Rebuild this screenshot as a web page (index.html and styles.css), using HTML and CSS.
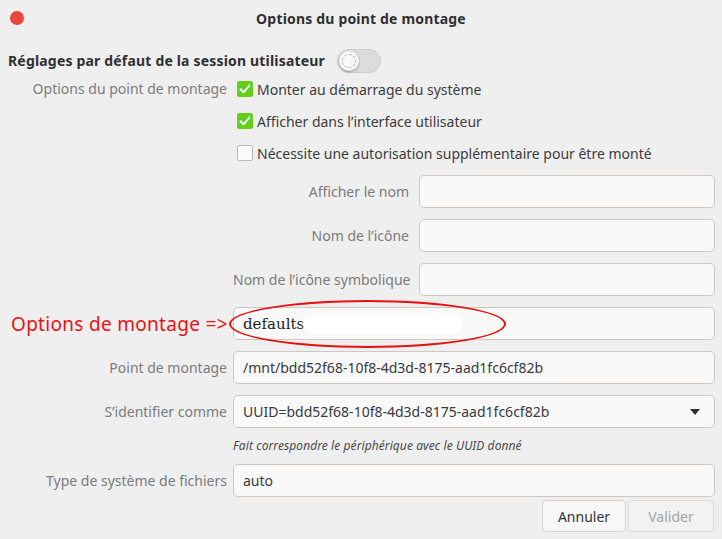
FILE: index.html
```html
<!DOCTYPE html>
<html lang="fr">
<head>
<meta charset="utf-8">
<title>Options du point de montage</title>
<link rel="stylesheet" href="styles.css">
</head>
<body>
<div class="window">
  <header class="titlebar">
    <span class="close"></span>
    <h1 class="title">Options du point de montage</h1>
  </header>
  <main class="content">
    <div class="session-row">
      <span class="session-label">Réglages par défaut de la session utilisateur</span>
      <span class="switch"><span class="knob"></span></span>
    </div>
    <div class="form">
      <div class="label label-top">Options du point de montage</div>
      <div class="options">
        <label class="check-row"><span class="check checked"><svg viewBox="0 0 16 16" width="16" height="16"><path d="M3.5 8.3 L6.6 11.2 L12.4 4.6" fill="none" stroke="#fff" stroke-width="2" stroke-linecap="round" stroke-linejoin="round"/></svg></span><span class="check-text">Monter au démarrage du système</span></label>
        <label class="check-row"><span class="check checked"><svg viewBox="0 0 16 16" width="16" height="16"><path d="M3.5 8.3 L6.6 11.2 L12.4 4.6" fill="none" stroke="#fff" stroke-width="2" stroke-linecap="round" stroke-linejoin="round"/></svg></span><span class="check-text">Afficher dans l’interface utilisateur</span></label>
        <label class="check-row"><span class="check"></span><span class="check-text">Nécessite une autorisation supplémentaire pour être monté</span></label>
        <div class="subgrid">
          <div class="label">Afficher le nom</div>
          <div class="entry"></div>
          <div class="label">Nom de l’icône</div>
          <div class="entry"></div>
          <div class="label">Nom de l’icône symbolique</div>
          <div class="entry"></div>
        </div>
      </div>

      <div class="label annot-label">Options de montage =&gt;</div>
      <div class="entry entry-options"><span class="serif-text">defaults</span><span class="redact"></span><span class="annot-ellipse"></span></div>

      <div class="label">Point de montage</div>
      <div class="entry">/mnt/bdd52f68-10f8-4d3d-8175-aad1fc6cf82b</div>

      <div class="label">S’identifier comme</div>
      <div class="entry combo"><span>UUID=bdd52f68-10f8-4d3d-8175-aad1fc6cf82b</span><svg class="arrow" width="10" height="6" viewBox="0 0 10 6"><path d="M0 0 H10 L5 6 Z" fill="#2e2e2e"/></svg></div>

      <div class="label"></div>
      <div class="hint">Fait correspondre le périphérique avec le UUID donné</div>

      <div class="label">Type de système de fichiers</div>
      <div class="entry">auto</div>
    </div>
    <div class="buttons">
      <button class="btn">Annuler</button>
      <button class="btn btn-disabled">Valider</button>
    </div>
  </main>
</div>
</body>
</html>
```

FILE: styles.css
```css
* { box-sizing: border-box; }

html, body {
  margin: 0;
  padding: 0;
  background: #efefef;
}

body {
  font-family: "Noto Sans", "Open Sans", sans-serif;
  font-size: 14px;
  color: #3c3c3c;
}

.window {
  width: 722px;
  height: 539px;
  background: #efefef;
  overflow: hidden;
}

.titlebar {
  height: 37px;
  display: flex;
  align-items: center;
  justify-content: center;
  position: relative;
}

.close {
  position: absolute;
  left: 10px;
  top: 11px;
  width: 14px;
  height: 14px;
  border-radius: 50%;
  background: #e9463a;
}

.title {
  margin: 0;
  font-size: 14px;
  font-weight: 700;
  letter-spacing: 0.18px;
  color: #2f2f2f;
}

.content {
  padding: 0 7px 0 8px;
}

.session-row {
  margin-top: 10px;
  height: 26px;
  display: flex;
  align-items: center;
  gap: 12px;
}

.session-label {
  font-weight: 700;
  letter-spacing: 0.18px;
  color: #303030;
}

.switch {
  width: 44px;
  height: 24px;
  border-radius: 12px;
  background: #dcdcdc;
  border: 1px solid #cbcbcb;
  position: relative;
  display: inline-block;
  margin-top: 2px;
}

.knob {
  position: absolute;
  left: 1px;
  top: 1px;
  width: 20px;
  height: 20px;
  border-radius: 50%;
  background: #f7f7f7;
  box-shadow: 0 1px 2px rgba(0,0,0,0.35);
  outline: 1px dashed #b5b5b5;
  outline-offset: -4px;
}

.form {
  display: grid;
  grid-template-columns: 219px 1fr;
  column-gap: 6px;
  row-gap: 11px;
  align-items: center;
}

.label {
  text-align: right;
  color: #7b7b7b;
  white-space: nowrap;
}

.label-top {
  align-self: start;
  line-height: 32px;
}

.options {
  display: flex;
  flex-direction: column;
}

.check-row {
  height: 32px;
  display: flex;
  align-items: center;
  gap: 4px;
  padding-left: 4px;
  color: #3c3c3c;
}

.check {
  width: 16px;
  height: 16px;
  border-radius: 2px;
  background: #fbfbfb;
  border: 1px solid #bdb9b4;
  display: inline-flex;
}

.check.checked {
  background: #62cf1c;
  border-color: #62cf1c;
}

.check.checked svg {
  margin: -1px;
}

.subgrid {
  margin-top: 6px;
  display: grid;
  grid-template-columns: 176px 1fr;
  column-gap: 10px;
  row-gap: 11px;
  align-items: center;
}

.entry {
  height: 33px;
  border: 1px solid #cdc8c3;
  border-radius: 5px;
  background: #f9f9f9;
  padding: 0 9px;
  display: flex;
  align-items: center;
  color: #3a3a3a;
  white-space: nowrap;
}

.entry-options {
  position: relative;
}

.serif-text {
  font-family: "DejaVu Serif", "Liberation Serif", serif;
  font-size: 15px;
  color: #1e1e1e;
}

.redact {
  display: inline-block;
  width: 158px;
  height: 19px;
  margin-left: 0;
  border-radius: 9px;
  background: #ffffff;
  box-shadow: 0 0 3px 1px #ffffff;
}

.annot-ellipse {
  position: absolute;
  left: -5px;
  top: -8px;
  width: 277px;
  height: 48px;
  border: 2px solid #e81010;
  border-radius: 50%;
  pointer-events: none;
}

.annot-label {
  text-align: left;
  color: #ee1111;
  font-size: 19px;
  letter-spacing: 0.3px;
  padding-left: 3px;
  overflow: visible;
}

.combo {
  justify-content: space-between;
  padding-right: 14px;
}

.arrow {
  display: block;
}

.hint {
  font-style: italic;
  font-size: 12px;
  letter-spacing: 0.08px;
  color: #4a4a4a;
  height: 14px;
  line-height: 14px;
}

.buttons {
  margin-top: 3px;
  display: flex;
  justify-content: flex-end;
  gap: 2px;
  padding-right: 1px;
}

.btn {
  font-family: inherit;
  font-size: 14px;
  height: 32px;
  border-radius: 4px;
  border: 1px solid #d6d2ce;
  background: #f7f7f7;
  color: #333;
  padding: 0 14px;
  width: 84px;
}

.btn-disabled {
  width: 86px;
  color: #a4a4a4;
  background: #f2f2f2;
  border-color: #dedad6;
}
```
